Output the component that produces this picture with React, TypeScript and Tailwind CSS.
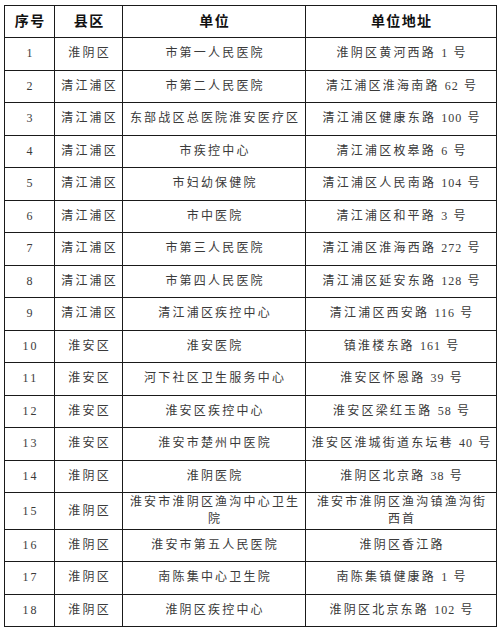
import React from "react";

type Row = [string, string, React.ReactNode, React.ReactNode];

function fmt(s: string): React.ReactNode {
  const parts = s.split(/(\d+)/);
  return parts.map((p, i) =>
    /^\d+$/.test(p) ? (
      <span key={i} className="tracking-[1px]">
        {p}
      </span>
    ) : (
      <React.Fragment key={i}>{p}</React.Fragment>
    )
  );
}

const rows: Row[] = [
  ["1", "淮阴区", "市第一人民医院", "淮阴区黄河西路 1 号"],
  ["2", "清江浦区", "市第二人民医院", "清江浦区淮海南路 62 号"],
  ["3", "清江浦区", "东部战区总医院淮安医疗区", "清江浦区健康东路 100 号"],
  ["4", "清江浦区", "市疾控中心", "清江浦区枚皋路 6 号"],
  ["5", "清江浦区", "市妇幼保健院", "清江浦区人民南路 104 号"],
  ["6", "清江浦区", "市中医院", "清江浦区和平路 3 号"],
  ["7", "清江浦区", "市第三人民医院", "清江浦区淮海西路 272 号"],
  ["8", "清江浦区", "市第四人民医院", "清江浦区延安东路 128 号"],
  ["9", "清江浦区", "清江浦区疾控中心", "清江浦区西安路 116 号"],
  ["10", "淮安区", "淮安医院", "镇淮楼东路 161 号"],
  ["11", "淮安区", "河下社区卫生服务中心", "淮安区怀恩路 39 号"],
  ["12", "淮安区", "淮安区疾控中心", "淮安区梁红玉路 58 号"],
  ["13", "淮安区", "淮安市楚州中医院", "淮安区淮城街道东坛巷 40 号"],
  ["14", "淮阴区", "淮阴医院", "淮阴区北京路 38 号"],
  [
    "15",
    "淮阴区",
    <>
      淮安市淮阴区渔沟中心卫生
      <br />
      院
    </>,
    <>
      淮安市淮阴区渔沟镇渔沟街
      <br />
      西首
    </>,
  ],
  ["16", "淮阴区", "淮安市第五人民医院", "淮阴区香江路"],
  ["17", "淮阴区", "南陈集中心卫生院", "南陈集镇健康路 1 号"],
  ["18", "淮阴区", "淮阴区疾控中心", "淮阴区北京东路 102 号"],
];

const headers = ["序号", "县区", "单位", "单位地址"];

export default function App() {
  return (
    <div className="w-[500px] h-[630px] bg-white pt-[5px] pl-[4px]">
      <div
        className="grid w-[493px] grid-cols-[50px_68px_183px_191px] grid-rows-[32px_repeat(14,32.5px)_37px_repeat(3,32.33px)] border-l border-t border-[#1a1a1a] text-[#3a3a3a]"
        style={{ fontFamily: '"Liberation Serif", "Noto Sans CJK SC", serif' }}
      >
        {headers.map((h) => (
          <div
            key={h}
            className="flex items-center justify-center border-r border-b border-[#1a1a1a] text-[14px] font-bold tracking-[1.3px] pl-[1.3px] text-[#111]"
          >
            {h}
          </div>
        ))}
        {rows.map((r) =>
          r.map((c, i) => (
            <div
              key={r[0] + "-" + i}
              className="flex items-center justify-center text-center border-r border-b border-[#1a1a1a] text-[12px] leading-[17px] tracking-[2.2px] pl-[2.2px]"
            >
              <span>{typeof c === "string" ? (i === 0 ? c : fmt(c)) : c}</span>
            </div>
          ))
        )}
      </div>
    </div>
  );
}
